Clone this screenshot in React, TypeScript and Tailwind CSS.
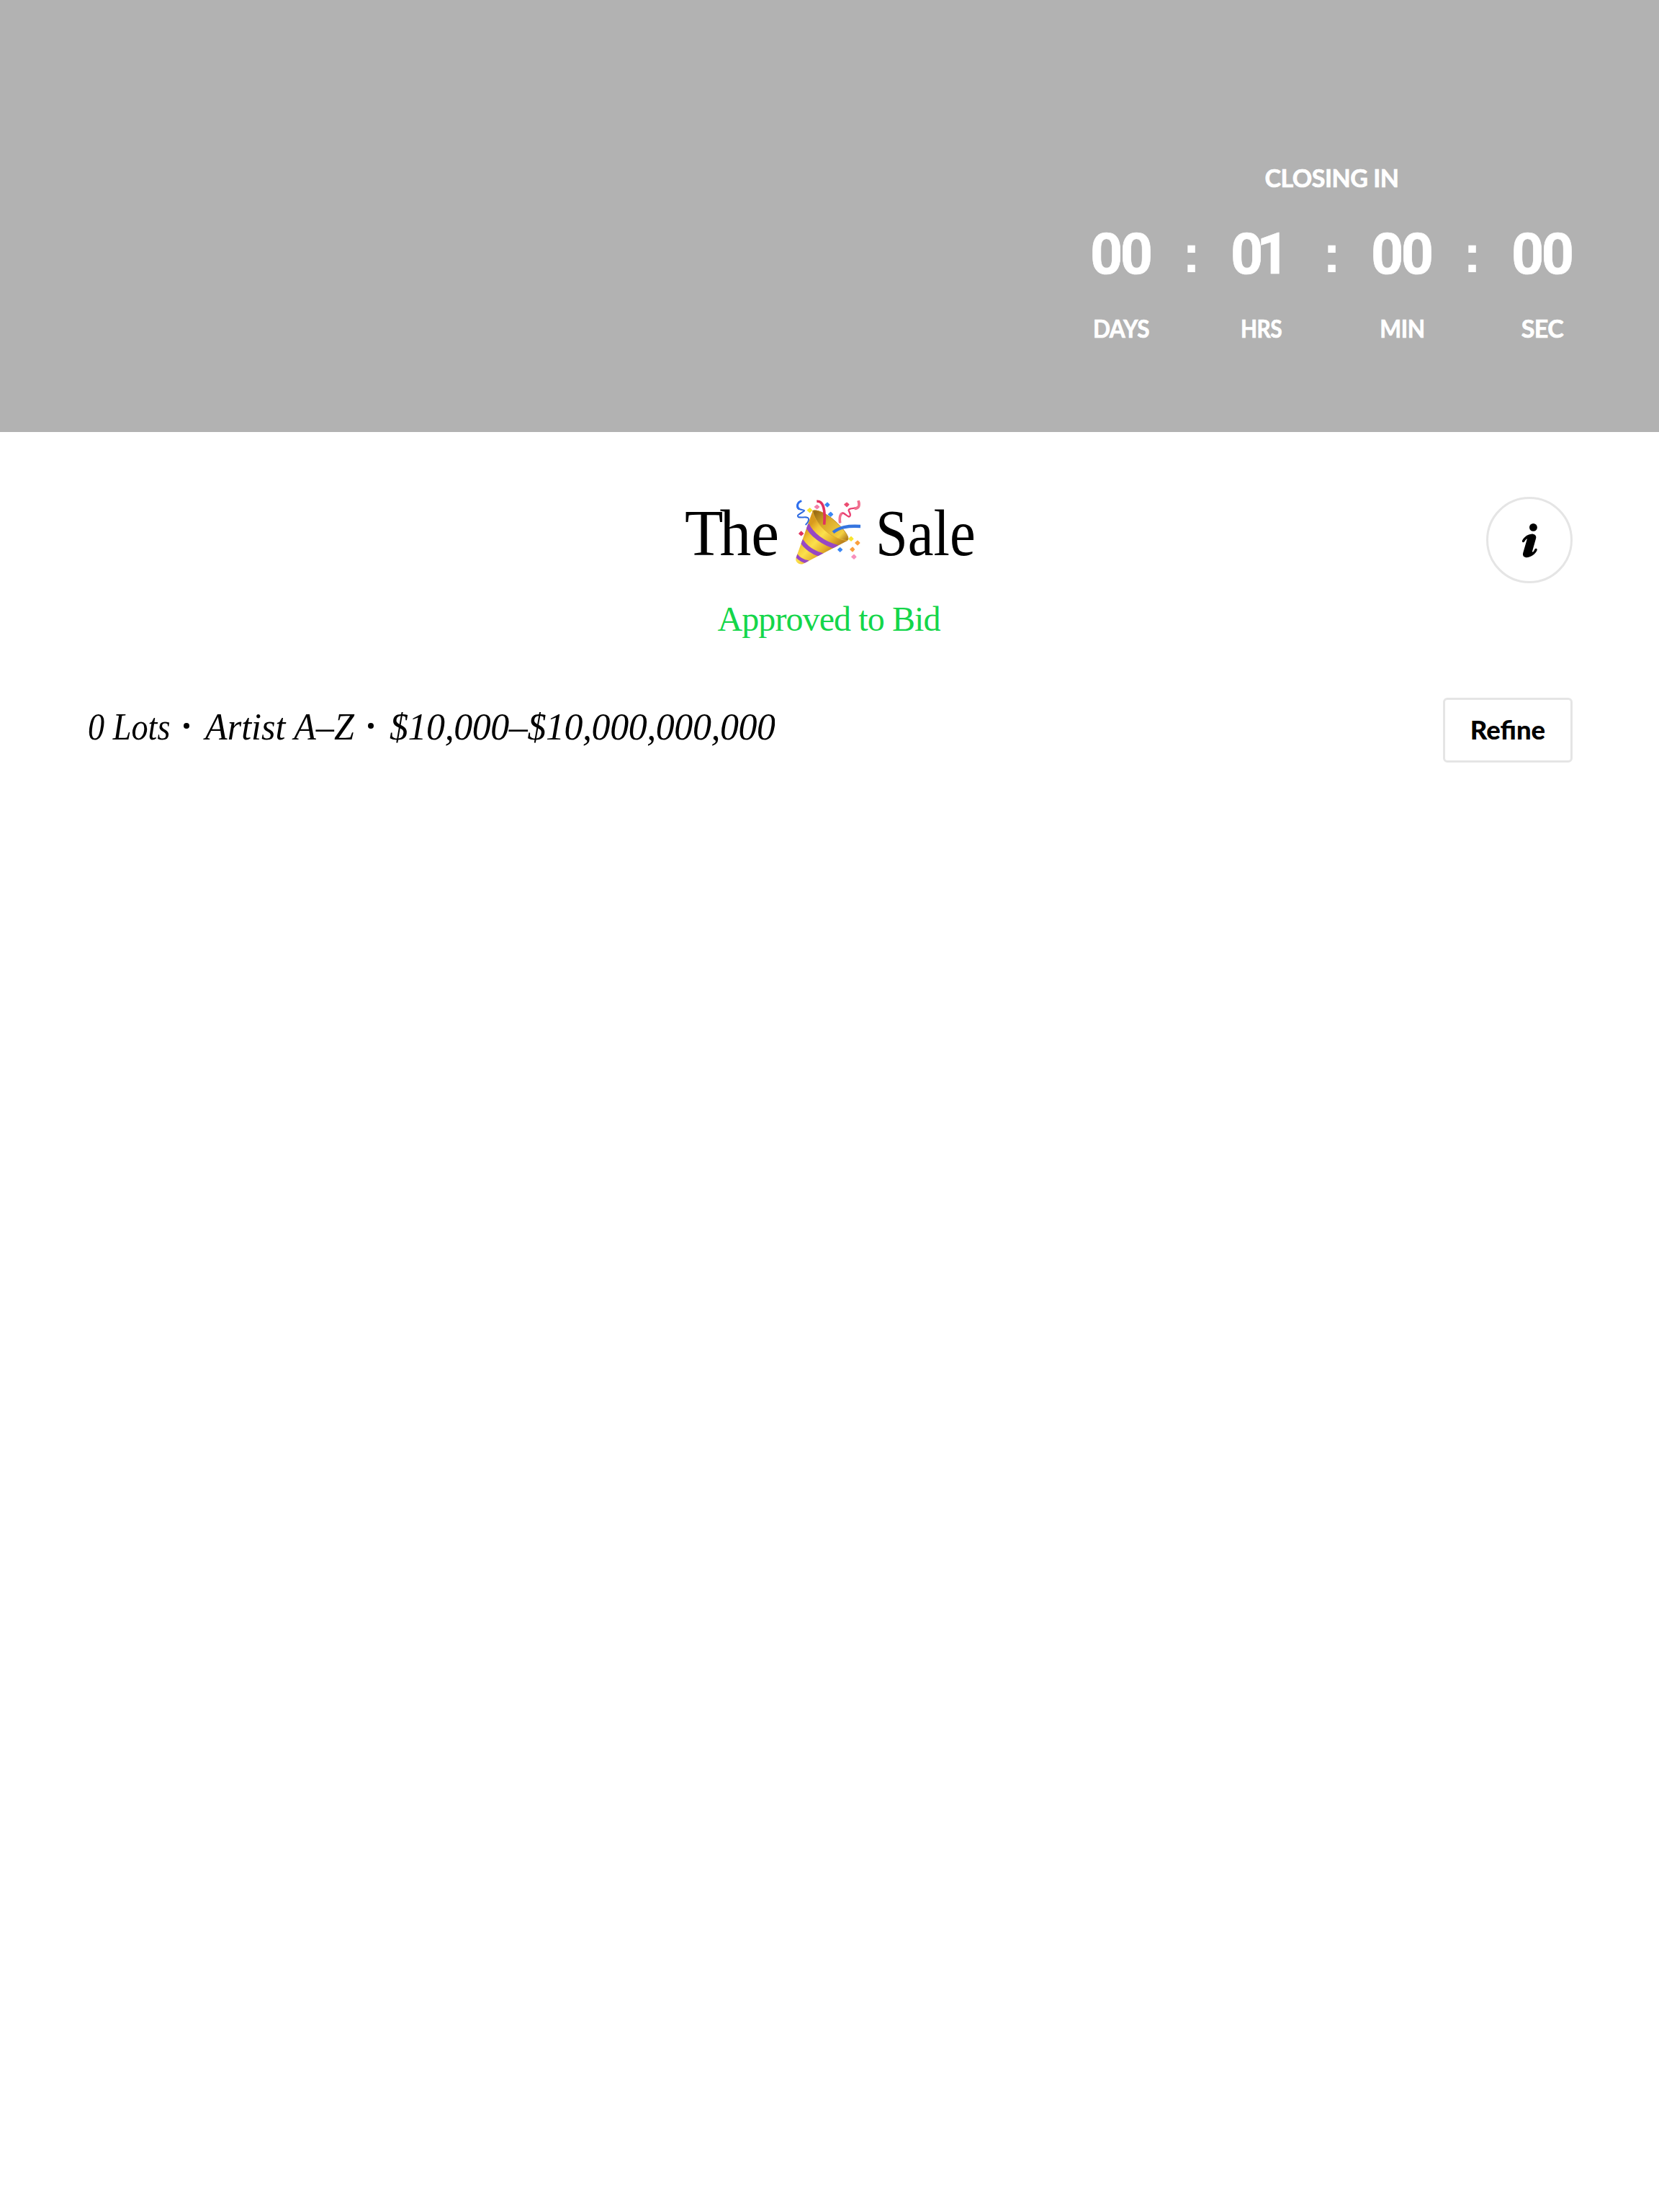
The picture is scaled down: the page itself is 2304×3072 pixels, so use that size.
import React from "react";

const units = [
  { value: "00", label: "DAYS", fit: "scale-x-[0.93]" },
  { value: "01", label: "HRS", fit: "scale-x-[0.88]" },
  { value: "00", label: "MIN", fit: "scale-x-[0.93]" },
  { value: "00", label: "SEC", fit: "scale-x-100" },
];

function Popper() {
  return (
    <svg viewBox="75 42 270 270" className="h-[90px] w-[90px]" fill="none">
      <defs>
        <linearGradient id="gold" x1="95" y1="190" x2="200" y2="290" gradientUnits="userSpaceOnUse">
          <stop offset="0" stopColor="#d99a1e" />
          <stop offset="0.2" stopColor="#f2c535" />
          <stop offset="0.45" stopColor="#fbe04c" />
          <stop offset="0.75" stopColor="#e6b22b" />
          <stop offset="1" stopColor="#bd8420" />
        </linearGradient>
        <linearGradient id="inside" x1="160" y1="90" x2="290" y2="210" gradientUnits="userSpaceOnUse">
          <stop offset="0" stopColor="#9a6c14" />
          <stop offset="0.35" stopColor="#d9a92a" />
          <stop offset="0.8" stopColor="#f3cf40" />
          <stop offset="1" stopColor="#a8721a" />
        </linearGradient>
        <clipPath id="cone">
          <path d="M146 88C150 130 215 208 292 212L108 308C92 316 72 304 76 286Z" />
        </clipPath>
      </defs>
      <path d="M146 88C160 78 202 98 236 128C276 164 303 200 291 211C270 228 222 206 186 170C156 138 138 102 146 88Z" fill="url(#inside)" />
      <path d="M146 88C150 130 215 208 292 212L108 308C92 316 72 304 76 286Z" fill="url(#gold)" />
      <g clipPath="url(#cone)" stroke="#9747c4">
        <path d="M122 146C140 186 190 226 250 240" strokeWidth="19" />
        <path d="M98 212C118 242 146 264 190 274" strokeWidth="18" />
        <path d="M76 272C88 288 104 298 128 302" strokeWidth="14" />
      </g>
      <path d="M146 88C150 130 215 208 292 212" stroke="#e0ac30" strokeWidth="3" />
      <path d="M146 88C160 82 202 98 236 128C276 164 303 200 291 211" stroke="#c18a20" strokeWidth="3" />
      <path d="M100 47C78 54 76 78 92 82C106 86 118 84 106 92C90 104 78 106 86 114C98 120 126 108 129 122C130 132 124 140 116 147" stroke="#2b68e0" strokeWidth="6" />
      <path d="M99 47C80 54 78 72 90 81" stroke="#2f70ee" strokeWidth="9" />
      <path d="M163 49C186 46 200 72 194 146" stroke="#e23160" strokeWidth="11" />
      <path d="M231 178C258 156 290 150 345 153" stroke="#3675df" strokeWidth="13" />
      <path d="M260 139C256 116 262 94 274 98C286 104 298 120 302 108C306 94 286 86 302 80C318 74 348 84 338 46" stroke="#ea3e70" strokeWidth="7" />
      <path d="M260 139C257 118 260 104 268 99M320 79C340 78 342 66 336 46" stroke="#f0708f" strokeWidth="11" />
      <g strokeLinejoin="round" strokeWidth="5">
        <path d="M164 65l8 7-8 7-9-7z" fill="#f47fa8" stroke="#f47fa8" />
        <path d="M207 55l8 8-8 8-9-8zM221 95l8 8-8 8-9-8zM260 243l8 7-8 8-8-8z" fill="#3b87f5" stroke="#3b87f5" />
        <path d="M134 78l8 8-8 8-9-8zM306 197l8 8-8 8-9-8z" fill="#f9e52e" stroke="#f9e52e" />
        <path d="M288 55l8 7-8 8-9-8z" fill="#ec4d72" stroke="#ec4d72" />
        <path d="M98 175l8 8-8 7-8-7z" fill="#e0345f" stroke="#e0345f" />
        <path d="M333 214l8 8-8 8-9-8zM312 241l7 8-7 8-9-8z" fill="#fa9f3e" stroke="#fa9f3e" />
        <path d="M318 272l8 8-8 8-9-8z" fill="#f890bd" stroke="#f890bd" />
      </g>
    </svg>
  );
}

function InfoIcon() {
  return (
    <svg viewBox="105 76 64 148" className="h-[49px] w-[21px]" fill="#000">
      <circle cx="152" cy="95" r="16.5" />
      <path d="M105 151C114 134 132 122 151 123C161 124 166 132 163 142L147 199C152 200 155 194 158 187C161 182 170 184 168 191C162 207 141 223 121 222C109 221 106 212 109 202L126 143C121 144 118 150 114 156C109 161 103 157 105 151Z" />
    </svg>
  );
}

export default function App() {
  return (
    <div className="h-[3072px] w-[2304px] overflow-hidden bg-white text-black">
      <header className="flex h-[600px] justify-end bg-[#b2b2b2] pr-[120px] pt-[227px] text-white">
        <div className="w-[669px] font-['Lato',sans-serif] text-[34px] font-bold leading-[40px] [-webkit-text-stroke:0.7px]">
          <div className="text-center tracking-[-0.5px]">CLOSING IN</div>
          <div className="mt-[46px] flex">
            {units.map((u, i) => (
              <React.Fragment key={u.label}>
                {i > 0 && (
                  <div className="w-[111px] text-center font-['Liberation_Sans',sans-serif] text-[74px] leading-[80px] [-webkit-text-stroke:0px]">:</div>
                )}
                <div className="flex w-[84px] flex-col items-center whitespace-nowrap">
                  <div className="-ml-px w-[85px] font-['Roboto',sans-serif] text-[79px] leading-[80px] tracking-[-3.5px]">
                    {u.value === "01" ? (
                      <>
                        <span className="tracking-[-9px]">0</span>1
                      </>
                    ) : (
                      u.value
                    )}
                  </div>
                  <div className={"mt-[43px] tracking-[-0.5px] " + u.fit}>{u.label}</div>
                </div>
              </React.Fragment>
            ))}
          </div>
        </div>
      </header>

      <main className="px-[120px] pt-[90px]">
        <div className="grid grid-cols-[120px_1fr_120px]">
          <div />
          <div className="flex flex-col items-center font-['Liberation_Serif',serif]">
            <h1 className="flex h-[100px] w-[402px] items-start whitespace-nowrap text-[91px] leading-[102px]">
              <span className="w-[154px] origin-left scale-x-[0.96]"><span className="tracking-[-5px]">T</span>he</span>
              <span className="mt-1 shrink-0"><Popper /></span>
              <span className="ml-[21px] w-[132px] origin-left scale-x-[0.885]">Sale</span>
            </h1>
            <p className="mt-[40px] pr-0.5 text-[48px] leading-[60px] tracking-[-0.9px] text-[#14d64a]">Approved to Bid</p>
          </div>
          <button className="flex h-[120px] w-[120px] items-center justify-center rounded-full border-[3px] border-[#e5e5e5]">
            <InfoIcon />
          </button>
        </div>

        <div className="mt-[79px] flex items-start justify-between">
          <div className="mt-[11px] flex whitespace-nowrap font-['Liberation_Serif',serif] text-[52px] italic leading-[60px]">
            <span className="ml-0.5 w-[133px] origin-left scale-x-[0.89]">0 Lots</span>
            <span className="mt-[24px] h-2 w-2 rounded-full bg-black" />
            <span className="ml-[22px] w-[226px] origin-left scale-x-[0.965]">Artist A–Z</span>
            <span className="mt-[24px] h-2 w-2 rounded-full bg-black" />
            <span className="ml-[22px] w-[535px] overflow-hidden tracking-[-0.45px]">$10,000–$10,000,000,000</span>
          </div>
          <button className="flex h-[90px] w-[180px] items-center justify-center rounded-[6px] border-[3px] border-[#e5e5e5] pb-0.5 font-['Lato',sans-serif] text-[36.5px] font-black leading-[40px]">
            Refine
          </button>
        </div>
      </main>
    </div>
  );
}
